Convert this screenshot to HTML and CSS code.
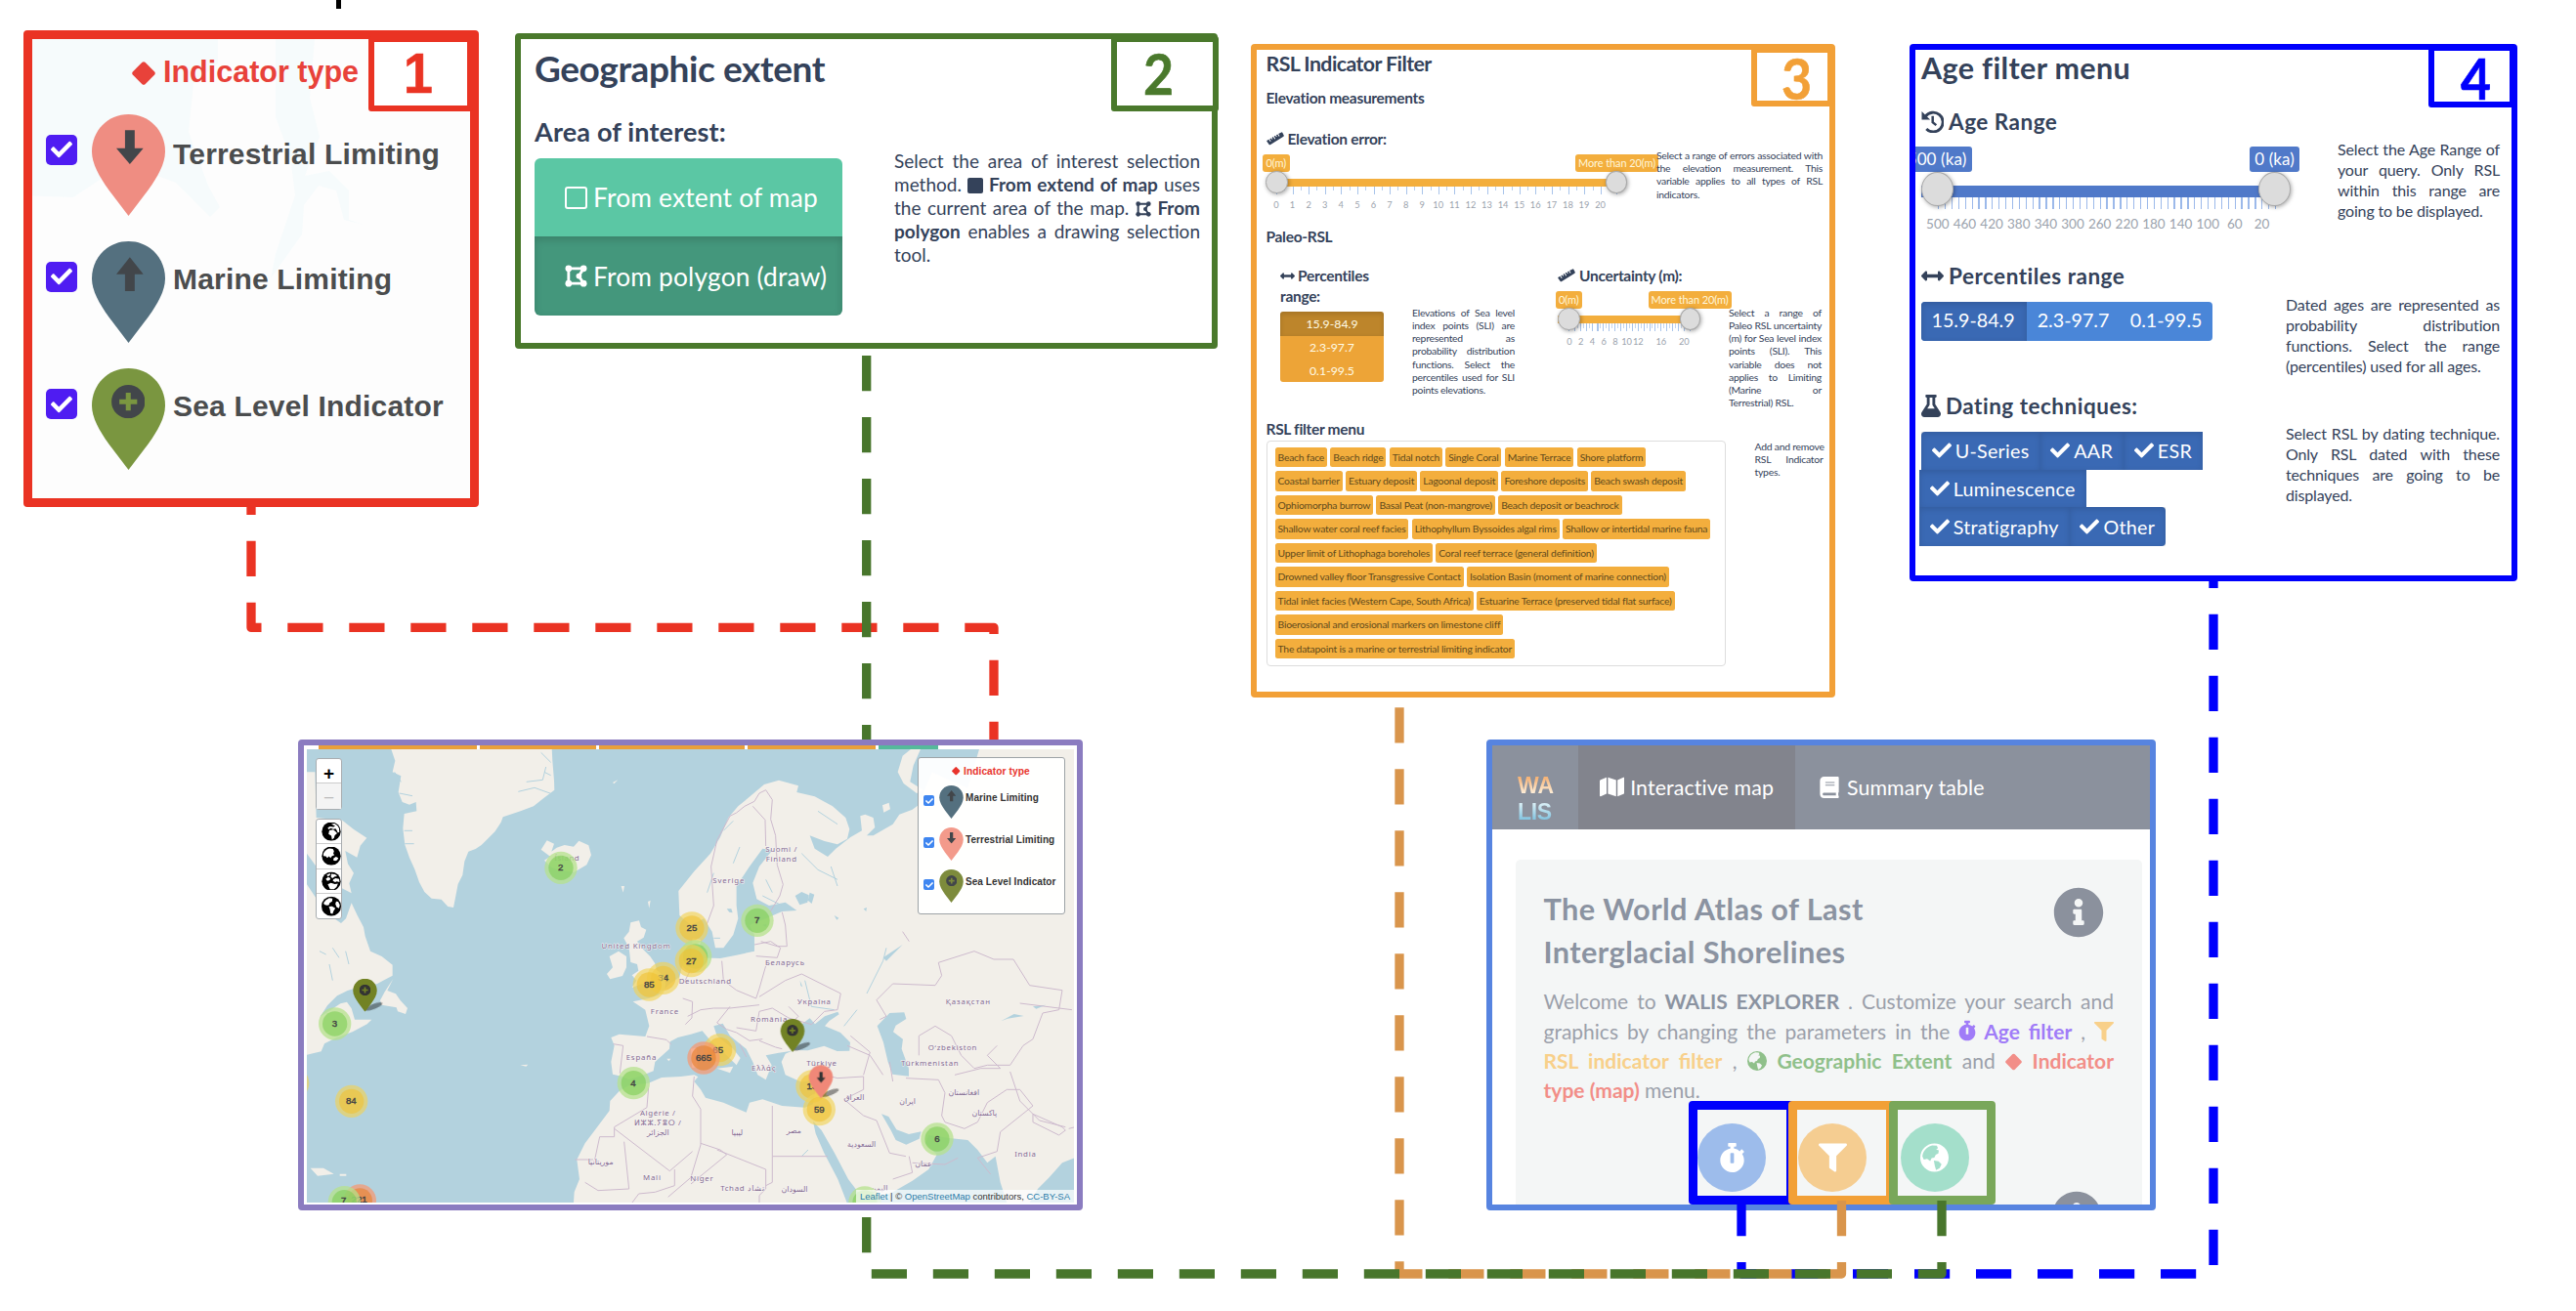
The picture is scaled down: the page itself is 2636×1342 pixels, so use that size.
FILE: index.html
```html
<!DOCTYPE html>
<html lang="en">
<head>
<meta charset="utf-8">
<title>WALIS Explorer overview</title>
<link rel="stylesheet" href="styles.css">
</head>
<body>
<svg class="defs" width="0" height="0">
  <defs>
    <symbol id="check" viewBox="0 0 512 512"><path d="M173.900 439.400l-166.400-166.400c-10-10-10-26.200 0-36.200l36.200-36.200c10-10 26.200-10 36.200 0L192 312.700 432.100 72.600c10-10 26.200-10 36.200 0l36.200 36.200c10 10 10 26.200 0 36.200l-294.400 294.400c-10 10-26.200 10-36.200 0z"/></symbol>
    <symbol id="filter" viewBox="0 0 512 512"><path d="M488 0H24C2.700 0-8 25.900 7 41L192 225.900V432c0 7.800 3.800 15.200 10.200 19.700l80 56C298 518.700 320 507.500 320 488V225.900L505 41C520 25.900 509.300 0 488 0z"/></symbol>
    <symbol id="info" viewBox="0 0 512 512"><path d="M256 8C119 8 8 119.100 8 256c0 137 111 248 248 248s248-111 248-248C504 119.100 393 8 256 8zm0 110c23.200 0 42 18.800 42 42s-18.800 42-42 42-42-18.800-42-42 18.800-42 42-42zm56 254c0 6.600-5.400 12-12 12h-88c-6.600 0-12-5.400-12-12v-24c0-6.600 5.400-12 12-12h12v-64h-12c-6.600 0-12-5.400-12-12v-24c0-6.600 5.400-12 12-12h64c6.600 0 12 5.400 12 12v100h12c6.600 0 12 5.400 12 12v24z"/></symbol>
    <symbol id="stopwatch" viewBox="0 0 448 512"><path d="M432 304c0 114.900-93.100 208-208 208S16 418.900 16 304c0-104 76.300-190.200 176-205.500V64h-28c-6.600 0-12-5.400-12-12V12c0-6.600 5.400-12 12-12h120c6.600 0 12 5.400 12 12v40c0 6.600-5.400 12-12 12h-28v34.500c37.500 5.800 71.700 21.600 99.700 44.600l27.500-27.500c4.700-4.700 12.300-4.700 17 0l28.300 28.300c4.700 4.700 4.700 12.300 0 17l-30 30C419.700 223.300 432 262.200 432 304zm-176 36V188.500c0-6.600-5.400-12-12-12h-40c-6.600 0-12 5.400-12 12V340c0 6.600 5.400 12 12 12h40c6.600 0 12-5.400 12-12z"/></symbol>
    <symbol id="arrows" viewBox="0 0 512 512"><path d="M378 170v46H134v-46c0-21.400-25.900-32-41-17L7 239c-9.400 9.400-9.400 24.600 0 34l86 86c15.100 15.100 41 4.400 41-17v-46h244v46c0 21.400 25.900 32 41 17l86-86c9.400-9.400 9.400-24.600 0-34l-86-86c-15.100-15.100-41-4.400-41 17z"/></symbol>
    <symbol id="map" viewBox="0 0 576 512"><path d="M0 117.700V464c0 11.300 11.400 19 21.900 14.900L160 416V32L20.100 88A32 32 0 0 0 0 117.700zM192 416l192 64V96L192 32v384zM554 33.200L416 96v384l139.900-56A32 32 0 0 0 576 394.300V48c0-11.300-11.400-19-22-14.800z"/></symbol>
    <symbol id="book" viewBox="0 0 448 512"><path fill-rule="evenodd" d="M448 360V24c0-13.300-10.700-24-24-24H96C43 0 0 43 0 96v320c0 53 43 96 96 96h328c13.300 0 24-10.700 24-24v-16c0-7.500-3.500-14.300-8.900-18.700-4.200-15.400-4.200-59.300 0-74.700 5.400-4.300 8.900-11.100 8.900-18.600zM128 128h220v26H128zm0 64h220v26H128zM381 448H96c-42 0-42-64 0-64h285c-2 17-2 47 0 64z"/></symbol>
    <symbol id="flask" viewBox="0 0 448 512"><path d="M437.200 403.500L320 215V64h8c13.300 0 24-10.700 24-24V24c0-13.300-10.700-24-24-24H120c-13.300 0-24 10.700-24 24v16c0 13.300 10.700 24 24 24h8v151L10.800 403.500C-18.500 450.600 15.300 512 70.900 512h306.200c55.700 0 89.400-61.500 60.100-108.500zM137.900 320l48.200-77.600c3.700-5.200 5.800-11.600 5.800-18.400V64h64v160c0 6.900 2.200 13.200 5.800 18.400l48.200 77.600h-172z"/></symbol>
    <symbol id="history" viewBox="0 0 24 24"><path fill="none" stroke="currentColor" stroke-width="3" d="M4.500 6.500A10.300 10.300 0 1 1 5.500 19.800"/><path d="M.5 1v9h9z"/><path fill="none" stroke="currentColor" stroke-width="2.600" d="M12.200 6v6.800l3.800 3"/></symbol>
    <symbol id="polygon" viewBox="0 0 24 24"><path fill="none" stroke="currentColor" stroke-width="3" d="M4 4v16h16l-5-8 5-8z"/><g><circle cx="4" cy="4" r="3.500"/><circle cx="4" cy="20" r="3.500"/><circle cx="20" cy="4" r="3.500"/><circle cx="20" cy="20" r="3.500"/><circle cx="15" cy="12" r="3"/></g></symbol>
    <symbol id="ruler" viewBox="0 0 26 20"><path d="M1 12.500L3.500 11l2 3.400 1.200-.7-2-3.400 2-1.200 1.200 2 1.200-.7-1.200-2 2-1.200 2 3.400 1.200-.7-2-3.400 2-1.200 1.200 2 1.200-.7-1.200-2 2-1.200 2 3.400 1.200-.7-2-3.400L22 .5q1-.5 1.600.5l2 4q.5 1-.5 1.600L5.500 19q-1 .5-1.600-.5L.5 14q-.5-1 .5-1.500z"/></symbol>
    <symbol id="globe" viewBox="0 0 24 24"><path fill-rule="evenodd" d="M12 0a12 12 0 1 0 0 24a12 12 0 1 0 0-24zM10 1.600l4 .3 1 2-1.600 1.200 2.300.6-.4 2.800-2.200 1-1.200 2.600-2.300.4-1.200 2.400-2.600-1.800-2.800.6-1.200-2.700C2 7 5 2.800 10 1.600zM11.500 14.500l4 .6 2.500 2.400-1.600 3.300-3 1.700-1-3.300z"/></symbol>
    <symbol id="globe-africa" viewBox="0 0 24 24"><circle cx="12" cy="12" r="12"/><path class="w" d="M12 2.500l4-.5q4.500 2 6 6l.2 5-2 .5-1.200-3-1.500-2-3 .5-3-1.200-3 1.400-1-2.200 3-1.500 4 .8 2.500-1z M9.500 10.500l5-.8 3 2.300 2 2.300-3 2.500-1 3.500-2.500 2-1-5-3.500-2z"/></symbol>
    <symbol id="globe-asia" viewBox="0 0 24 24"><circle cx="12" cy="12" r="12"/><path class="w" d="M2 9q2-5 7.500-6.500L14 3l1.500 3-1 3 1.500 2-3 1-2 2.500-2-2-2 2-2-2-3-.5zM15 15l3-2 3 1.500-1.500 3-2.500 1-2.500-1z"/></symbol>
    <symbol id="globe-europe" viewBox="0 0 24 24"><circle cx="12" cy="12" r="12"/><path class="w" d="M6 4l4-2 1 1.500-3 2.500zM12 2.500l5 .5 2.500 2.500-3 .5-3 2-2-1.500zM5 9l3-2.500 3 1.500-1 2.500-3 1zM14.500 9.500l3-1.500 4.500 1 .5 4-3.500-1-2 1-3-1.500zM7.500 16l4-2 5 1.500 4-.5q-1 5-5 7h-5z"/></symbol>
    <symbol id="globe-americas" viewBox="0 0 24 24"><circle cx="12" cy="12" r="12"/><path class="w" d="M2.500 8Q5 3.500 9.500 2l4 .5-.5 3.500-3 2-1 2.500-2.500.5-3-1zM9 12.500l4-.5 4 2.500-2 3-1.500 4-2.500-1-.5-4zM18 6l2.500.5 2 4-1 4-3-1.500-1.500-4z"/></symbol>
    <symbol id="diamond" viewBox="0 0 24 24"><path d="M10.500.8q1.500-1.200 3 0l9.700 9.700q1.200 1.500 0 3l-9.700 9.700q-1.500 1.200-3 0L.8 13.500q-1.200-1.500 0-3z"/></symbol>
    <symbol id="pin" viewBox="0 0 75 104"><path d="M37.500 0C16 0 0 17 0 38c0 13 8 26 17 39l20.500 27L58 77c9-13 17-26 17-39C75 17 59 0 37.500 0z"/></symbol>
    <symbol id="up" viewBox="0 0 28 35"><path d="M14 0l14 17.500H19V35H9V17.500H0z"/></symbol>
    <symbol id="down" viewBox="0 0 28 35"><path d="M14 35L0 18.500h9V0h10v18.500h9z"/></symbol>
    <symbol id="plus" viewBox="0 0 34 34"><path fill-rule="evenodd" d="M17 0a17 17 0 1 0 0 34a17 17 0 1 0 0-34zM14.500 8h5v6.500H26v5h-6.500V26h-5v-6.500H8v-5h6.500z"/></symbol>
  </defs>
</svg>

<main class="board">
  <div class="caret"></div>

  <section class="panel p6">
    <nav>
      <div class="logo"><span class="wa">WA</span><span class="lis">LIS</span></div>
      <div class="tab on"><svg class="mapic"><use href="#map"/></svg><span>Interactive map</span></div>
      <div class="tab"><svg class="bookic"><use href="#book"/></svg><span>Summary table</span></div>
    </nav>
    <article>
      <header><h2>The World Atlas of Last<br>Interglacial Shorelines</h2><svg class="infoic"><use href="#info"/></svg></header>
      <p class="just"><span>Welcome to <b>WALIS EXPLORER</b> . Customize your search and</span><span>graphics by changing the parameters in the <b class="violet"><svg class="sw"><use href="#stopwatch"/></svg> Age filter</b> , <b class="amber"><svg class="fi"><use href="#filter"/></svg></b></span><span><b class="amber">RSL indicator filter</b> , <b class="green"><svg><use href="#globe"/></svg> Geographic Extent</b> and <b class="coral"><svg class="di"><use href="#diamond"/></svg> Indicator</b></span><span><b class="coral">type (map)</b> menu.</span></p>
      <svg class="infoic second"><use href="#info"/></svg>
    </article>
    <div class="node n1"><i><svg class="sw"><use href="#stopwatch"/></svg></i></div>
    <div class="node n2"><i><svg><use href="#filter"/></svg></i></div>
    <div class="node n3"><i><svg><use href="#globe"/></svg></i></div>
  </section>

  <svg class="links" viewBox="0 0 2636 1342">
    <path stroke="#ea3323" d="M257 490.700V642.400H1017V757"/>
    <path stroke="#0000fc" d="M1782 1229V1304H2265V590"/>
    <path stroke="#d9954c" d="M1884.500 1229V1304H1432V712"/>
    <path stroke="#48762c" d="M1987 1229V1304H886.700V357"/>
  </svg>

  <section class="panel p1">
    <svg class="p1-bg" viewBox="33 40 448 470"><path d="M33 40h190v25l-25 20-5 50 20 55 12 22-10 10-35-35-40-15-35 10-30 20-52-2z M282 40h40l-5 60 10 40-15 40 25-5 20 20 0 30 15 5-20-5-8-30-18-5-15 20-2 30-32 45 5-25 20-60-5-40-15-40z"/></svg>
    <h2 class="p1-title"><svg class="ic"><use href="#diamond"/></svg><span>Indicator type</span></h2>
    <ul class="p1-list">
      <li><span class="cb"><svg><use href="#check"/></svg></span><span class="pin salmon"><svg class="drop"><use href="#pin"/></svg><svg class="mark"><use href="#down"/></svg></span><b class="low">Terrestrial Limiting</b></li>
      <li><span class="cb"><svg><use href="#check"/></svg></span><span class="pin slate"><svg class="drop"><use href="#pin"/></svg><svg class="mark"><use href="#up"/></svg></span><b>Marine Limiting</b></li>
      <li><span class="cb"><svg><use href="#check"/></svg></span><span class="pin olive"><svg class="drop"><use href="#pin"/></svg><svg class="mark round"><use href="#plus"/></svg></span><b>Sea Level Indicator</b></li>
    </ul>
    <div class="badge"><span>1</span></div>
  </section>

  <section class="panel p2">
    <h2>Geographic extent</h2>
    <h3>Area of interest:</h3>
    <div class="p2-row">
      <div class="p2-btns">
        <div><i class="square"></i><span>From extent of map</span></div>
        <div class="on"><svg class="poly"><use href="#polygon"/></svg><span>From polygon (draw)</span></div>
      </div>
      <p class="just"><span>Select the area of interest selection</span><span>method. <i class="solid"></i> <b>From extend of map</b> uses</span><span>the current area of the map. <svg><use href="#polygon"/></svg> <b>From</b></span><span><b>polygon</b> enables a drawing selection</span><span>tool.</span></p>
    </div>
    <div class="badge"><span>2</span></div>
  </section>

  <section class="panel p3">
    <h2>RSL Indicator Filter</h2>
    <h3 class="em">Elevation measurements</h3>
    <h3 class="ee"><svg class="ruler"><use href="#ruler"/></svg>Elevation error:</h3>
    <div class="p3-row">
      <div class="slider s-elev">
        <div class="tags"><span class="tag">0(m)</span><span class="tag wide">More than 20(m)</span></div>
        <div class="track"><i class="knob a"></i><i class="knob b"></i></div>
        <div class="ticks"></div>
        <div class="nums"><span>0</span><span>1</span><span>2</span><span>3</span><span>4</span><span>5</span><span>6</span><span>7</span><span>8</span><span>9</span><span>10</span><span>11</span><span>12</span><span>13</span><span>14</span><span>15</span><span>16</span><span>17</span><span>18</span><span>19</span><span>20</span></div>
      </div>
      <p class="just"><span>Select a range of errors associated with</span><span>the elevation measurement. This</span><span>variable applies to all types of RSL</span><span>indicators.</span></p>
    </div>
    <h3 class="paleo">Paleo-RSL</h3>
    <div class="p3-cols">
      <div class="pct">
        <h3><svg class="arr"><use href="#arrows"/></svg>Percentiles<br>range:</h3>
        <div class="pct-btns"><div class="on">15.9-84.9</div><div>2.3-97.7</div><div>0.1-99.5</div></div>
      </div>
      <p class="just pd"><span>Elevations of Sea level</span><span>index points (SLI) are</span><span>represented as</span><span>probability distribution</span><span>functions. Select the</span><span>percentiles used for SLI</span><span>points elevations.</span></p>
      <div class="unc">
        <h3><svg class="ruler"><use href="#ruler"/></svg>Uncertainty (m):</h3>
        <div class="slider s-unc">
          <div class="tags"><span class="tag">0(m)</span><span class="tag wide">More than 20(m)</span></div>
          <div class="track"><i class="knob a"></i><i class="knob b"></i></div>
          <div class="ticks"></div>
          <div class="nums"><span>0</span><span>2</span><span>4</span><span>6</span><span>8</span><span>10</span><span>12</span><span></span><span>16</span><span></span><span>20</span></div>
        </div>
      </div>
      <p class="just ud"><span>Select a range of</span><span>Paleo RSL uncertainty</span><span>(m) for Sea level index</span><span>points (SLI). This</span><span>variable does not</span><span>applies to Limiting</span><span>(Marine or</span><span>Terrestrial) RSL.</span></p>
    </div>
    <h3 class="rf">RSL filter menu</h3>
    <div class="p3-row">
      <div class="chips">
        <div><span>Beach face</span><span>Beach ridge</span><span>Tidal notch</span><span>Single Coral</span><span>Marine Terrace</span><span>Shore platform</span></div>
        <div><span>Coastal barrier</span><span>Estuary deposit</span><span>Lagoonal deposit</span><span>Foreshore deposits</span><span>Beach swash deposit</span></div>
        <div><span>Ophiomorpha burrow</span><span>Basal Peat (non-mangrove)</span><span>Beach deposit or beachrock</span></div>
        <div><span>Shallow water coral reef facies</span><span>Lithophyllum Byssoides algal rims</span><span>Shallow or intertidal marine fauna</span></div>
        <div><span>Upper limit of Lithophaga boreholes</span><span>Coral reef terrace (general definition)</span></div>
        <div><span>Drowned valley floor Transgressive Contact</span><span>Isolation Basin (moment of marine connection)</span></div>
        <div><span>Tidal inlet facies (Western Cape, South Africa)</span><span>Estuarine Terrace (preserved tidal flat surface)</span></div>
        <div><span>Bioerosional and erosional markers on limestone cliff</span></div>
        <div><span>The datapoint is a marine or terrestrial limiting indicator</span></div>
      </div>
      <p class="just ad"><span>Add and remove</span><span>RSL Indicator</span><span>types.</span></p>
    </div>
    <div class="badge"><span>3</span></div>
  </section>

  <section class="panel p4">
    <h2>Age filter menu</h2>
    <h3 class="ar"><svg class="hist"><use href="#history"/></svg>Age Range</h3>
    <div class="p4-row r1">
      <div class="slider s-age">
        <div class="tags"><span class="tag">500 (ka)</span><span class="tag">0 (ka)</span></div>
        <div class="track"><i class="knob a"></i><i class="knob b"></i></div>
        <div class="ticks"></div>
        <div class="nums"><span>500</span><span>460</span><span>420</span><span>380</span><span>340</span><span>300</span><span>260</span><span>220</span><span>180</span><span>140</span><span>100</span><span>60</span><span>20</span></div>
      </div>
      <p class="just"><span>Select the Age Range of</span><span>your query. Only RSL</span><span>within this range are</span><span>going to be displayed.</span></p>
    </div>
    <h3 class="pr"><svg class="arr"><use href="#arrows"/></svg>Percentiles range</h3>
    <div class="p4-row r2">
      <div class="seg"><div class="on">15.9-84.9</div><div>2.3-97.7</div><div>0.1-99.5</div></div>
      <p class="just"><span>Dated ages are represented as</span><span>probability distribution</span><span>functions. Select the range</span><span>(percentiles) used for all ages.</span></p>
    </div>
    <h3 class="dt"><svg class="fl"><use href="#flask"/></svg>Dating techniques:</h3>
    <div class="p4-row r3">
      <div class="tech">
        <div class="t1"><span><svg><use href="#check"/></svg>U-Series</span><span><svg><use href="#check"/></svg>AAR</span><span><svg><use href="#check"/></svg>ESR</span></div>
        <div class="t2"><span><svg><use href="#check"/></svg>Luminescence</span></div>
        <div class="t3"><span><svg><use href="#check"/></svg>Stratigraphy</span><span><svg><use href="#check"/></svg>Other</span></div>
      </div>
      <p class="just"><span>Select RSL by dating technique.</span><span>Only RSL dated with these</span><span>techniques are going to be</span><span>displayed.</span></p>
    </div>
    <div class="badge"><span>4</span></div>
  </section>

  <section class="panel p5">
    <div class="strip"><i></i><i></i><i></i><i></i><i class="teal"></i></div>
    <svg class="geo" viewBox="71 80 2356 1392">
      <rect class="sea" x="71" y="80" width="2356" height="1392"/>
      <g class="land">
        <path d="M330 80l12 35-8 35 26 12-8 50 12 30 22 8 20-8 2 28-38 8-4 45 6 50 14 40 16 35 14 40 16 30 22 20 30 3 20 22 17 3 6-30 8-42 14-28 6-42 12-30 22-8 18-12 22-22 20-20 18-28 6-16 54-18 40-15 32-26 32-24-1-30-5-60-3-60z"/>
        <path d="M71 150h25l4 140 80 8 35 28 40 26-20 24-10 36-36-20 8 40 18 28-14 32 7 30-38-20-50-34-49-68z"/>
        <path d="M71 495l30 45 40 50 35 24 15-14 17-48 18 38 19 36 5 28 16 46 35 16 33 26v33l-26 14-22 12-50 8-40 12-32 16-30 30-22 34 32-20 30-20 20-5 14 20 10 34h52l-14 14-45 24-50 18-36 18-10 24-59 14z"/>
        <path d="M336 785l-18 36 26 10 14 20 22 24-6 18-24-8-4-12-46-8-4-14 14-26z"/>
        <path d="M790 388l18-28 22 10-8 24 16-12 24-8 28 5 16-18 30 14 8 30-14 30-38 22-40-4-30-10-22-22 18-12z"/>
        <path d="M1065 612l26-6 6 20 16 8-8 24-20 12 16 22 24 24 14 20 8 26-16 28-30 10-32 12 14-22-14-16 20-14-4-20-20-6-5-44-16-30 16-20z"/>
        <path d="M1000 716l28-16 24 16v34l-12 26-38 10-10-16 18-20z"/>
        <path d="M82 1366h40l32 18-50 6zM172 1384h20v6h-20zM1010 182l16-8-12 12zM1036 500l10 0-4 20zM1118 548l8-4-4 24zM726 1050l24-2-6 6zM1176 1030l12 0-6 8z"/>
        <g transform="translate(1230 0)">
          <path d="M-18 515L30 455 80 400 110 350 135 290 165 255 205 222 245 188 290 175 350 192 345 212 400 225 455 255 495 290 507 325 500 355 470 372 430 362 385 345 400 385 440 410 465 385 510 350 545 330 540 285 555 280 580 290 585 320 560 345 580 345 640 310 660 280 700 265 720 250 760 150 870 200 905 80 1197 80 1197 1335 1160 1350 1120 1395 1085 1430 1060 1472 990 1472 970 1410 955 1330 930 1350 900 1310 870 1280 820 1275 750 1265 740 1290 775 1325 750 1370 700 1405 640 1440 560 1472-340 1472-338 1440-322 1400-330 1340-305 1290-275 1250-230 1190-228 1160-200 1130-170 1112-110 1105-70 1088-10 1085 30 1080 42 1086 30 1100 50 1125 65 1150 120 1165 190 1195 200 1165 240 1155 300 1175 370 1180 395 1170 402 1130 400 1095 360 1102 310 1080 298 1040 310 1015 330 1006 290 1012 250 1020 268 1050 250 1095 225 1080 210 1040 190 1000 140 960 118 922 90 930 100 960 150 1000 172 1028 160 1050 120 1010 80 975 55 945 20 955-20 965-44 978-46 1000-90 1040-95 1068-130 1082-170 1095-190 1085-220 1078-225 1040-215 990-225 965-200 955-120 962-108 930-120 880-158 855-110 845-80 835-45 800-15 780-5 740 20 715 25 660 50 665 45 720 110 722 160 712 215 700 215 650 200 620 250 600 300 578 345 575 310 550 260 560 222 540 210 490 230 440 270 390 240 385 200 440 160 500 160 560 165 600 150 650 120 690 95 690 85 640 60 600 20 620-15 590z"/>
          <path d="M655 150l15-50 25-20h30l-22 50-10 50 40 25-20 10-40-30zM608 252l20-8 4 20-20 10zM20 1000l18-4 2 60-16 2zM100 1060l50-6-10 20z"/>
        </g>
      </g>
      <g class="sea" transform="translate(1230 0)">
        <path d="M335 1004l10-44 16-36 24-18 16 18 30-24 40-14 4 8-30 20-14 16 48 20 30 30-2 26-38 1-40-16-50 14z"/>
        <path d="M592 930l38-40 45-2 6 20-32 20-8 20 30 22-4 30 22 60v24l-50-6-14-38-14-60z"/>
        <path d="M605 1200l22 8 24 40 38 14 38-8-6 22-40 18-32-14-15-30z"/>
        <path d="M395 1222l26 28 40 70 42 80 30 40-12 32h-22l-28-72-42-80-26-60z"/>
        <path d="M340 530l20-12 22 10-4 22-24 8zM385 520l14 6-8 28-12-10zM972 915l40-22 30 6-50 8zM1070 870l40-5-30 12zM355 790l8 20-6-4zM240 620l12-4v10zM550 570l10-4-2 12zM130 570l14 0 4 12-10-2zM610 720l60-40-50 50zM460 590l14 8-6 6z"/>
      </g>
      <path class="creek" d="M720 210l50-12 50 18M745 180l50-6 10-40M790 90l30 30M800 150l20 10M340 150l20 30M355 215l40 8M370 330h25M372 370h28M150 690l20 30M190 700l10 40M140 740l10 50M110 700l20 10M1440 510l20 60M1480 480l20 40M1470 530l60 30M1590 400l50 50 60 30M1680 440l20 60M1850 690l-10 40-50 100M1760 880l-40 50M1380 430l20-50M1350 330l30-30M1640 270l60 40M1300 520l20-60M1320 660l20 0M1600 790l20 80 70 10M1610 1310l-20 20"/>
      <g class="border">
        <path d="M1298 620l22-60-8-120 18-80 40-75 20-10 25-20 30-15 15-25 20-10 20 30-5 60 15 50 5 90 18 60-10 35-30 50M1440 255l38 42 2 80M1530 580l10 40 5 65-30 0-50-15M1445 680l50-10 30 20-10 30-65-5M1345 730l5 60 40 30 60 25 10-30 20-70M1460 840l80-50 50-20 120 60-10 50-40 5-40 40-70-20-50-30-40 10-10 60-60-10M1230 795l20-40M1225 845l30 10-2 50-20 20M1240 900l40-20 40-5 50 0 90-10M1370 870l-40 50 30 20 30 10 40 25 40-5M1400 985l20 40M1460 975l50 20 20 5M1115 962l60 10 15 15M1012 985l30 5-10 85M1550 870l30 30-30 30"/>
        <path d="M1260 1085l-5 60 25 40 0 110-30 100-70 60M1280 1290l60 20 20 15-110 90M1500 1175v155h170M1330 1310l150 60v60l-20 20v22M1500 1330v80l-20 10M1015 1245l170 130 70-60M895 1340h55M955 1340l15-70h45v-30l100-60 5-60M1045 1285l15 145-95 5-40-25M1200 1370v50l-60 20-50 5-20 27M1660 1080l40 10 80-5 0 40-60 30M1720 1155l60 50 40 15M1780 1080l20-70-60-50M1730 990l70 30 40 60M1870 1100l-10-60M1820 1220l40 100 50 10M1930 1350l100 5 40-20M1870 1400l60-20-10-50"/>
        <path d="M1820 850l50-50 130 5 20-30-10-40 110-35 60 25 60 0 50 80 100 15-10 60-50 10-30 80-30 20-40 60-70 0-40 10-40-40-30-60-50-30-50 30v60M1820 850l30 50-20 10M1910 1090l100 5 20 40-10 70 10 20 60 20 40-20 30-60 60-40 40 0 40 50-100 80-10 60-60 20 40 50M2060 1080l80-20 60 0-40-40 30-30M2230 1070l30 90 60 60 80 20M2300 1200l90 40 10 10-20 15-80-40zM2430 1240l-20 5M2260 860l160 20M1900 640l20 30"/>
      </g>
      <g class="label">
        <text x="869" y="421" textLength="76">Ísland</text>
        <text x="1081" y="691" textLength="211">United Kingdom</text>
        <text x="1293" y="799" textLength="160">Deutschland</text>
        <text x="1169" y="894" textLength="85">France</text>
        <text x="1097" y="1033" textLength="92">España</text>
        <text x="1148" y="1205" textLength="108">Algérie /</text>
        <text x="1148" y="1235" textLength="144">ⵍⵣⵣ.ⵢⴻⵔ /</text>
        <text x="1149" y="1266">الجزائر</text>
        <text x="973" y="1354">موريتانيا</text>
        <text x="1130" y="1404" textLength="54">Mali</text>
        <text x="1283" y="1405" textLength="71">Niger</text>
        <text x="1408" y="1437" textLength="135">Tchad تشاد</text>
        <text x="1568" y="1438">السودان</text>
        <text x="1392" y="1266">ليبيا</text>
        <text x="1566" y="1260">مصر</text>
        <text x="1774" y="1302">السعودية</text>
        <text x="1964" y="1360">عمان</text>
        <text x="1828" y="1436">اليمن</text>
        <text x="1915" y="1168">ایران</text>
        <text x="1751" y="1156">العراق</text>
        <text x="2088" y="1143">افغانستان</text>
        <text x="2151" y="1204">پاکستان</text>
        <text x="2276" y="1332" textLength="65">India</text>
        <text x="1365" y="490" textLength="96">Sverige</text>
        <text x="1527" y="395" textLength="97">Suomi /</text>
        <text x="1527" y="425" textLength="94">Finland</text>
        <text x="1538" y="742" textLength="120">Беларусь</text>
        <text x="1628" y="864" textLength="102">Україна</text>
        <text x="1489" y="916" textLength="112">România</text>
        <text x="1473" y="1066" textLength="74">Ελλάς</text>
        <text x="1651" y="1051" textLength="92">Türkiye</text>
        <text x="2100" y="864" textLength="136">Қазақстан</text>
        <text x="2053" y="1005" textLength="149">Oʻzbekiston</text>
        <text x="1983" y="1052" textLength="176">Türkmenistan</text>
      </g>
      <g class="cluster g"><circle cx="851" cy="444" r="50"/><circle cx="851" cy="444" r="38"/><text x="850" y="453">2</text></g>
      <g class="cluster g"><circle cx="157" cy="923" r="50"/><circle cx="157" cy="923" r="38"/><text x="156" y="932">3</text></g>
      <g class="cluster y"><circle cx="28" cy="1105" r="50"/></g>
      <g class="cluster y"><circle cx="208" cy="1161" r="50"/><circle cx="208" cy="1161" r="38"/><text x="207" y="1170">84</text></g>
      <g class="cluster o"><circle cx="234" cy="1466" r="50"/><circle cx="234" cy="1466" r="38"/><text x="232" y="1472">221</text></g>
      <g class="cluster g"><circle cx="186" cy="1471" r="50"/><circle cx="186" cy="1471" r="38"/><text x="184" y="1475">7</text></g>
      <g class="cluster g"><circle cx="1074" cy="1105" r="50"/><circle cx="1074" cy="1105" r="38"/><text x="1073" y="1114">4</text></g>
      <g class="cluster y"><circle cx="1165" cy="783" r="50"/><circle cx="1165" cy="783" r="38"/><text x="1165" y="792">34</text></g>
      <g class="cluster y"><circle cx="1122" cy="803" r="50"/><circle cx="1122" cy="803" r="38"/><text x="1122" y="812">85</text></g>
      <g class="cluster y"><circle cx="1253" cy="629" r="50"/><circle cx="1253" cy="629" r="38"/><text x="1253" y="638">25</text></g>
      <g class="cluster g"><circle cx="1264" cy="716" r="50"/><circle cx="1264" cy="716" r="38"/></g>
      <g class="cluster y"><circle cx="1251" cy="730" r="50"/><circle cx="1251" cy="730" r="38"/><text x="1251" y="739">27</text></g>
      <g class="cluster g"><circle cx="1454" cy="606" r="50"/><circle cx="1454" cy="606" r="38"/><text x="1453" y="615">7</text></g>
      <g class="cluster y"><circle cx="1339" cy="1003" r="50"/><circle cx="1339" cy="1003" r="38"/><text x="1333" y="1012">65</text></g>
      <g class="cluster o"><circle cx="1289" cy="1028" r="50"/><circle cx="1289" cy="1028" r="38"/><text x="1289" y="1038">665</text></g>
      <g class="cluster y"><circle cx="1622" cy="1115" r="50"/><circle cx="1622" cy="1115" r="38"/><text x="1622" y="1124">13</text></g>
      <g class="cluster y"><circle cx="1644" cy="1186" r="50"/><circle cx="1644" cy="1186" r="38"/><text x="1644" y="1195">59</text></g>
      <g class="cluster g"><circle cx="2006" cy="1277" r="50"/><circle cx="2006" cy="1277" r="38"/><text x="2006" y="1286">6</text></g>
      <g class="cluster g"><circle cx="1784" cy="1472" r="50"/><circle cx="1784" cy="1472" r="38"/></g>
      <g class="shade"><ellipse cx="277" cy="870" rx="28" ry="8" transform="rotate(-22 277 870)"/><ellipse cx="1590" cy="993" rx="28" ry="8" transform="rotate(-22 1590 993)"/><ellipse cx="1678" cy="1135" rx="28" ry="8" transform="rotate(-22 1678 1135)"/></g>
      <svg class="mk-olive" x="212" y="784" width="75" height="102"><use href="#pin"/></svg><svg class="mk-dark" x="232" y="802" width="35" height="35"><use href="#plus"/></svg>
      <svg class="mk-olive" x="1524" y="908" width="76" height="102"><use href="#pin"/></svg><svg class="mk-dark" x="1544" y="926" width="35" height="35"><use href="#plus"/></svg>
      <svg class="mk-salmon" x="1611" y="1050" width="76" height="102"><use href="#pin"/></svg><svg class="mk-dark" x="1636" y="1070" width="27" height="35"><use href="#down"/></svg>
    </svg>
    <div class="zoomctl"><span>+</span><span class="off">−</span></div>
    <div class="globes"><svg><use href="#globe-africa"/></svg><svg><use href="#globe-asia"/></svg><svg><use href="#globe-europe"/></svg><svg><use href="#globe-americas"/></svg></div>
    <div class="legend">
      <h4><svg><use href="#diamond"/></svg>Indicator type</h4>
      <div><span class="cb"><svg><use href="#check"/></svg></span><span class="pin slate"><svg class="drop"><use href="#pin"/></svg><svg class="mark"><use href="#up"/></svg></span><b>Marine Limiting</b></div>
      <div><span class="cb"><svg><use href="#check"/></svg></span><span class="pin salmon"><svg class="drop"><use href="#pin"/></svg><svg class="mark"><use href="#down"/></svg></span><b>Terrestrial Limiting</b></div>
      <div><span class="cb"><svg><use href="#check"/></svg></span><span class="pin olive"><svg class="drop"><use href="#pin"/></svg><svg class="mark round"><use href="#plus"/></svg></span><b>Sea Level Indicator</b></div>
    </div>
    <div class="credit"><a>Leaflet</a> | © <a>OpenStreetMap</a> contributors, <a>CC-BY-SA</a></div>
  </section>
</main>
</body>
</html>
```
FILE: styles.css
```css
* { box-sizing: border-box; }
body { margin: 0; background: #fff; font-family: Lato, "Liberation Sans", sans-serif; color: #34425a; }
h2, h3, h4, p, ul { margin: 0; padding: 0; font-weight: 700; }
p { font-weight: 400; }
i { font-style: normal; }
svg { fill: currentColor; }
.w { fill: #fff; }
.defs { position: absolute; }
.board { position: relative; width: 2636px; height: 1342px; overflow: hidden; white-space: nowrap; }
.caret { position: absolute; left: 343.500px; top: 0; width: 5px; height: 9px; background: #000; }
.panel { position: absolute; border: 6px solid; border-radius: 4px; background: #fff; }
.badge { position: absolute; border: 6px solid; border-radius: 3px; background: #fff; font-size: 57px; font-weight: 700; text-align: center; }
.badge span { display: inline-block; transform: scaleX(.94); -webkit-text-stroke: .6px currentColor; }
.links { position: absolute; left: 0; top: 0; width: 2636px; height: 1342px; }
.links path { fill: none; stroke-width: 9.300; stroke-dasharray: 36.200 26.800; stroke-linejoin: round; }
.just span { display: block; text-align: justify; text-align-last: justify; }
.just > span:last-child { text-align-last: left; }

/* 1: indicator type */
.p1 { left: 24px; top: 31px; width: 466px; height: 488px; border-width: 9px; border-color: #ea3323; background: #fdfdfd; font-family: "Liberation Sans", Arial, sans-serif; }
.p1-bg { position: absolute; left: 0; top: 0; width: 448px; height: 470px; fill: #f6fbfc; }
.p1-title { position: relative; display: flex; align-items: center; height: 66px; padding-left: 102px; gap: 8px; font-size: 30.500px; color: #e8423a; }
.p1-title .ic { width: 24px; height: 24px; margin-top: 4px; }
.p1-list { position: relative; list-style: none; color: #4b4d4e; font-size: 30px; letter-spacing: .180px; }
.p1-list li { display: flex; height: 130.400px; padding: 10.500px 0 0 14px; }
.cb { display: flex; align-items: center; justify-content: center; background: #4f1cf2; color: #fff; }
.p1-list .cb { width: 32px; height: 31px; margin-top: 21px; border-radius: 5px; }
.p1-list .cb svg { width: 22px; height: 22px; }
.pin { position: relative; display: block; }
.pin .drop { display: block; width: 100%; height: 100%; }
.pin .mark { position: absolute; left: 33.500%; top: 15.500%; width: 37%; height: 34%; color: #42464a; }
.pin .mark.round { left: 26.500%; top: 16.500%; width: 46%; height: 33%; }
.p1-list .pin { width: 75px; height: 104px; margin-left: 15px; }
.salmon .drop { fill: #ef8d82; }
.slate .drop { fill: #54707f; }
.olive .drop { fill: #7a9640; }
.p1-list b { margin-left: 8px; line-height: 78px; }
.p1-list b.low { line-height: 82px; }
.p1 .badge { left: 344px; top: -3px; width: 107px; height: 77px; border-color: #ea3323; color: #ea3323; line-height: 64px; padding-right: 6px; }

/* 2: geographic extent */
.p2 { left: 527px; top: 34px; width: 719px; height: 323px; padding-left: 14px; border-color: #4a792c; }
.p2 h2 { height: 60px; line-height: 60px; font-size: 37px; letter-spacing: -.410px; }
.p2 h3 { height: 62px; padding-top: 7px; line-height: 55px; font-size: 27px; letter-spacing: .160px; }
.p2-row { display: flex; gap: 53.500px; }
.p2-btns { width: 314.500px; height: 161px; border-radius: 6px; overflow: hidden; color: #fff; font-size: 26.300px; letter-spacing: .200px; }
.p2-btns div { display: flex; align-items: center; height: 80px; padding-left: 31px; gap: 6px; background: #5bc7a4; }
.p2-btns .on { height: 81px; background: #44977c; box-shadow: inset 0 3px 8px rgba(0, 0, 0, .16); }
.square { width: 23px; height: 23px; border: 2px solid #fff; border-radius: 3px; }
.poly { width: 23px; height: 23px; }
.p2 p { width: 313px; margin-top: -9px; font-size: 19px; line-height: 24px; }
.solid { display: inline-block; width: 16px; height: 16px; background: #34425a; border-radius: 2px; vertical-align: -2px; }
.p2 p svg { width: 16px; height: 16px; vertical-align: -2px; }
.p2 .badge { left: 604px; top: -3px; width: 110px; height: 77px; border-color: #4a792c; color: #4a792c; line-height: 65px; padding-right: 12px; }

/* 3: RSL indicator filter */
.p3 { left: 1279.500px; top: 45px; width: 598px; height: 668.700px; padding-left: 10px; border-color: #f2a037; font-size: 10.400px; letter-spacing: -.250px; }
.p3 h2 { height: 28px; line-height: 28px; font-size: 21.300px; letter-spacing: -.550px; }
.p3 h3 { font-size: 15.500px; letter-spacing: -.300px; }
.p3 .em { height: 43px; line-height: 43px; }
.p3 .ee { height: 31px; padding-top: 9px; line-height: 22px; }
.ruler { width: 18px; height: 14px; margin-right: 4px; vertical-align: -1px; }
.arr { width: 15px; height: 15px; margin-right: 3px; vertical-align: -2px; }
.p3-row { display: flex; }
.p3 .just { line-height: 13.200px; }
.slider { position: relative; flex: none; }
.tags { position: absolute; z-index: 1; display: flex; justify-content: space-between; color: #fff; }
.tag { display: flex; justify-content: center; border-radius: 3px; }
.track { position: relative; }
.knob { position: absolute; z-index: 2; border: 1px solid #a9a9a9; border-radius: 50%; background: #dcdcdc; box-shadow: 1px 1px 4px rgba(0, 0, 0, .35); }
.nums { display: flex; color: #9ba3ad; }
.nums span { flex: none; text-align: center; }
.p3 .track { height: 8px; background: #f3ae3d; }
.p3 .tag { height: 18px; line-height: 18px; background: #f3ae3d; color: #fff7dc; font-size: 11px; letter-spacing: -.100px; }
.p3 .knob { width: 22.500px; height: 22.500px; top: -8px; }
.p3 .nums { font-size: 9.300px; line-height: 12px; letter-spacing: 0; }
.s-elev { width: 399.500px; height: 65px; padding-top: 30px; }
.s-elev .tags { left: -3.500px; top: 5px; width: 405px; }
.s-elev .tag { width: 27.500px; }
.s-elev .tag.wide { width: 85px; }
.s-elev .track { width: 359px; }
.s-elev .knob.a { left: -.500px; }
.s-elev .knob.b { left: 347.500px; width: 21.500px; }
.s-elev .ticks { width: 350px; height: 8px; margin-left: 10px; background: repeating-linear-gradient(90deg, #a9c4ea 0 1px, transparent 1px 16.590px), repeating-linear-gradient(90deg, transparent 0 8.300px, #bcd0ea 8.300px 9.300px, transparent 9.300px 16.590px) 0 0 / 100% 4px no-repeat; }
.s-elev .nums { margin: 4.500px 0 0 2.200px; }
.s-elev .nums span { width: 16.590px; }
.p3-row .just { width: 170px; position: relative; z-index: 2; }
.paleo { height: 38.700px; padding-top: 8.700px; line-height: 30px; }
.p3-cols { display: flex; height: 156px; padding: 15px 0 0 14.500px; }
.pct { width: 106px; }
.pct h3, .unc h3 { line-height: 21px; }
.pct-btns { margin-top: 5.600px; border-radius: 3px; overflow: hidden; font-size: 12.300px; line-height: 23.500px; text-align: center; color: #fffbe6; letter-spacing: 0; }
.pct-btns div { height: 23.500px; background: #eda437; }
.pct-btns .on { height: 25px; line-height: 25px; background: #bd852b; box-shadow: inset 0 2px 5px rgba(0, 0, 0, .15); }
.pd { width: 105px; margin: 42px 0 0 29px; }
.unc { width: 175px; margin-left: 44px; }
.s-unc { padding-top: 30.500px; }
.s-unc .tags { left: -2.500px; top: 5.500px; width: 180px; }
.s-unc .tag { width: 27.500px; }
.s-unc .tag.wide { width: 85px; }
.s-unc .track { width: 135px; }
.s-unc .knob.a { left: 0; }
.s-unc .knob.b { left: 124.500px; width: 21.500px; }
.s-unc .ticks { width: 125px; height: 8px; margin-left: 10.500px; background: repeating-linear-gradient(90deg, #a9c4ea 0 1px, transparent 1px 5.900px), repeating-linear-gradient(90deg, transparent 0 2.900px, #c6d6ec 2.900px 3.900px, transparent 3.900px 5.900px) 0 0 / 100% 5px no-repeat; }
.s-unc .nums { margin: 5px 0 0 6px; }
.s-unc .nums span { width: 11.760px; }
.ud { width: 95px; margin: 42px 0 0; }
.rf { height: 38px; padding-top: 15.500px; line-height: 22.500px; }
.chips { display: flex; flex-direction: column; gap: 3.700px; width: 470px; height: 231.500px; padding: 6px 0 0 8px; border: 1.500px solid #ddd; border-radius: 4px; font-size: 10.350px; color: #5f4a1c; letter-spacing: -.200px; }
.chips div { display: flex; gap: 3.200px; }
.chips span { height: 20.800px; padding: 0 3px; border-radius: 2.500px; background: #f3ae3d; line-height: 20.500px; }
.p3-row .just.ad { width: 70px; margin-left: 30px; }
.p3 .badge { left: 506px; top: -3px; width: 84px; height: 61px; border-color: #f2a037; color: #f2a037; line-height: 52px; padding-left: 10px; }

/* 4: age filter */
.p4 { left: 1954px; top: 45px; width: 622px; height: 550px; padding-left: 6px; border-color: #0000fc; font-size: 16px; }
.p4 h2 { height: 36px; line-height: 36px; font-size: 30.500px; letter-spacing: .350px; }
.p4 h3 { display: flex; align-items: center; font-size: 22.500px; letter-spacing: .500px; }
.p4-row { display: flex; justify-content: space-between; width: 592px; }
.p4 p { line-height: 21px; letter-spacing: -.160px; }
.hist { width: 23px; height: 23px; margin-right: 5px; }
.p4 .arr { width: 23px; height: 23px; margin-right: 5px; }
.fl { width: 20px; height: 23px; margin-right: 5px; }
.p4 .ar { height: 40px; margin-top: 17.500px; }
.r1 { height: 119px; }
.r1 p { width: 166px; margin-top: -3px; }
.s-age { width: 380px; padding-top: 45px; clip-path: inset(-20px -40px -20px -6px); }
.s-age .tags { left: -20px; top: 5px; width: 407px; font-size: 17px; letter-spacing: .100px; }
.s-age .tag { padding: 0 5px; height: 26px; line-height: 25px; background: #5079c9; }
.s-age .tag:first-child { width: 72px; }
.s-age .track { width: 361px; height: 12px; background: #5079c9; }
.s-age .knob { top: -14px; width: 33px; height: 35px; }
.s-age .knob.a { left: 0; }
.s-age .knob.b { left: 344.500px; }
.s-age .ticks { width: 346px; height: 12px; margin-left: 16.500px; background: repeating-linear-gradient(90deg, #9cb9ea 0 1.300px, transparent 1.300px 6.900px); }
.s-age .nums { margin: 5px 0 0 3px; font-size: 13.500px; line-height: 20px; }
.s-age .nums span { width: 27.650px; }
.pr { height: 37px; }
.r2 { height: 98px; }
.r2 p, .r3 p { width: 219px; }
.seg { display: flex; height: 40px; margin-top: 8px; border-radius: 4px; overflow: hidden; background: #4a86d8; color: #fff; font-size: 19.700px; line-height: 38px; }
.seg div { padding: 0 10.500px; }
.seg div + div { padding: 0 10.700px; }
.seg .on { width: 108px; background: #3a69b4; box-shadow: inset 0 2px 6px rgba(0, 0, 0, .15); }
.dt { height: 34px; }
.tech { margin: 9.500px 0 0 -2px; color: #fff; font-size: 19.700px; letter-spacing: .280px; }
.tech > div { display: flex; width: max-content; height: 38.700px; background: #3a69b4; }
.tech > div > span { display: flex; align-items: center; padding: 0 11px 0 10.700px; box-shadow: inset 0 2px 6px rgba(0, 0, 0, .13); }
.tech svg { width: 20px; height: 20px; margin-right: 4px; }
.tech .t1 { margin-left: 2px; border-radius: 4px 0 0 0; }
.tech .t3 { height: 40px; border-radius: 0 4px 4px 0; }
.p4 .badge { left: 524.500px; top: -5px; width: 89px; height: 64px; border-color: #0000fc; color: #0000fc; line-height: 57px; padding-left: 10px; }

/* map */
.p5 { left: 305px; top: 756.500px; width: 803px; height: 482.500px; padding: 0 3px 0 2.700px; border-color: #8b7cc0; }
.strip { display: flex; gap: 3px; height: 4px; padding-left: 12.500px; }
.strip i { width: 162px; background: #e9a03b; }
.strip i:nth-child(2) { width: 119px; }
.strip i:nth-child(3) { width: 149px; }
.strip i:nth-child(4) { width: 131px; }
.strip .teal { width: 61px; background: #55b99b; }
.geo { display: block; width: 785.300px; height: 464px; }
.geo .sea { fill: #b3d2de; }
.geo .land { fill: #f2efe9; }
.geo .creek { fill: none; stroke: #b3d2de; stroke-width: 3; }
.geo .border { fill: none; stroke: #cdbacd; stroke-width: 3; stroke-linejoin: round; }
.geo .label { font-family: "Noto Sans", "DejaVu Sans", sans-serif; font-size: 23.500px; fill: #836a90; stroke: #f7f4f4; stroke-width: 3; paint-order: stroke; text-anchor: middle; }
.geo .cluster text { font: 500 29px "Liberation Sans", Arial, sans-serif; fill: #444; stroke: #444; stroke-width: 1.200; text-anchor: middle; }
.geo .shade { fill: #000; opacity: .4; }
.mk-olive { fill: #728224; }
.mk-salmon { fill: #f08878; }
.mk-dark { fill: #333; }
.g circle { fill: rgba(181, 226, 140, .75); }
.g circle + circle { fill: rgba(125, 205, 85, .6); }
.y circle { fill: rgba(241, 211, 87, .65); }
.y circle + circle { fill: rgba(240, 194, 50, .6); }
.o circle { fill: rgba(250, 150, 110, .7); }
.o circle + circle { fill: rgba(230, 130, 50, .65); }
.zoomctl, .globes { position: absolute; left: 12px; width: 27px; border: 1px solid #a9adb0; border-radius: 3px; background: #fff; }
.zoomctl { top: 13px; height: 53px; color: #000; font: 700 19px/25px "Liberation Sans", Arial, sans-serif; text-align: center; }
.zoomctl span { display: block; height: 25.500px; padding-top: 2px; border-bottom: 1px solid #ccc; }
.zoomctl .off { border: 0; background: #f4f4f4; color: #bbb; font-weight: 400; }
.globes { top: 75.500px; height: 103px; color: #000; }
.globes svg { display: block; width: 25px; height: 25.300px; padding: 2.500px 0 2.500px 5px; border-bottom: 1px solid #ccc; }
.globes svg:last-child { border: 0; }
.legend { position: absolute; right: 12px; top: 12.500px; width: 151px; height: 161px; border: 1px solid #9da3a6; border-radius: 3px; background: rgba(255, 255, 255, .95); font: 10px "Liberation Sans", Arial, sans-serif; letter-spacing: .070px; color: #333; }
.legend h4 { display: flex; align-items: center; gap: 3.500px; height: 27px; padding-left: 34px; color: #e8342c; font-size: 10.200px; }
.legend h4 svg { width: 8.500px; height: 8.500px; }
.legend div { display: flex; height: 43px; padding: 1px 0 0 5px; }
.legend .cb { width: 11px; height: 11px; margin-top: 10px; border-radius: 2px; background: #3f86f0; }
.legend .cb svg { width: 8px; height: 8px; }
.legend .pin { width: 25px; height: 34px; margin-left: 5px; }
.legend .salmon .drop { fill: #f39a8b; }
.legend .olive .drop { fill: #7d8b3c; }
.legend b { margin-left: 2px; line-height: 26px; }
.credit { position: absolute; right: 3px; bottom: 2px; height: 13px; padding: 0 4px; background: rgba(255, 255, 255, .7); color: #333; font: 9.500px/13px "Liberation Sans", Arial, sans-serif; }
.credit a { color: #2a7ba8; }

/* app window */
.p6 { left: 1521px; top: 756.500px; width: 685px; height: 482.500px; border-color: #5784e0; }
.p6 nav { display: flex; height: 86px; background: #8b919d; color: #fff; font-size: 21.300px; letter-spacing: .130px; }
.logo { display: flex; flex-direction: column; width: 88px; padding: 28px 0 0 26px; font: 700 23px/27px "Liberation Sans", Arial, sans-serif; letter-spacing: 0; }
.logo span { width: 40px; color: transparent; background-clip: text; -webkit-background-clip: text; }
.wa { background-image: linear-gradient(#f6b478 20%, #fdf0dc 80%); }
.lis { background-image: linear-gradient(#d4ecf4 20%, #7fc3e0 80%); letter-spacing: -.300px; }
.tab { display: flex; align-items: center; height: 86px; padding: 0 22px 0 25px; }
.tab.on { width: 222px; background: #82848d; padding-left: 22px; }
.mapic { width: 26px; height: 23px; margin-right: 6px; }
.bookic { width: 20px; height: 22px; margin-right: 8px; }
.p6 article { position: relative; height: 353.500px; margin: 31px 8px 0 24px; padding: 29px 29px 0 28.500px; border-radius: 5px 5px 0 0; overflow: hidden; background: #f4f6f6; color: #9ba0aa; }
.p6 header { display: flex; justify-content: space-between; color: #8b93a1; }
.p6 h2 { font-size: 30.700px; line-height: 44.700px; letter-spacing: .430px; }
.infoic { width: 52px; height: 52px; margin: -1px 10px 0 0; color: #8b919d; }
.infoic.second { position: absolute; left: 548px; top: 339px; margin: 0; }
.p6 p { margin-top: 12.200px; font-size: 21px; line-height: 30.400px; }
.p6 p b { color: #8b93a1; }
.p6 p svg { width: 20px; height: 20px; vertical-align: -2px; }
.p6 p .sw { width: 18px; height: 22px; }
.p6 p .di { width: 17px; height: 18px; }
.p6 p .violet { color: #a07cf8; }
.p6 p .amber { color: #f8d08a; }
.p6 p .green { color: #8fc08a; }
.p6 p .coral { color: #f28e88; }
.node { position: absolute; top: 364px; width: 109px; height: 106.500px; border: 9px solid; border-radius: 4px; }
.node i { display: flex; align-items: center; justify-content: center; width: 70px; height: 70px; margin-top: 14px; border-radius: 50%; color: #fff; }
.node svg { width: 29px; height: 30px; }
.n1 { left: 201px; border-color: #0000fc; }
.n2 { left: 303px; border-color: #f2a037; }
.n3 { left: 405.500px; border-color: #79a75a; }
.n1 i { background: #9dbceb; }
.n2 i { background: #f5cd91; margin-left: 1px; }
.n3 i { background: #a4dfcb; margin-left: 3px; }
```
